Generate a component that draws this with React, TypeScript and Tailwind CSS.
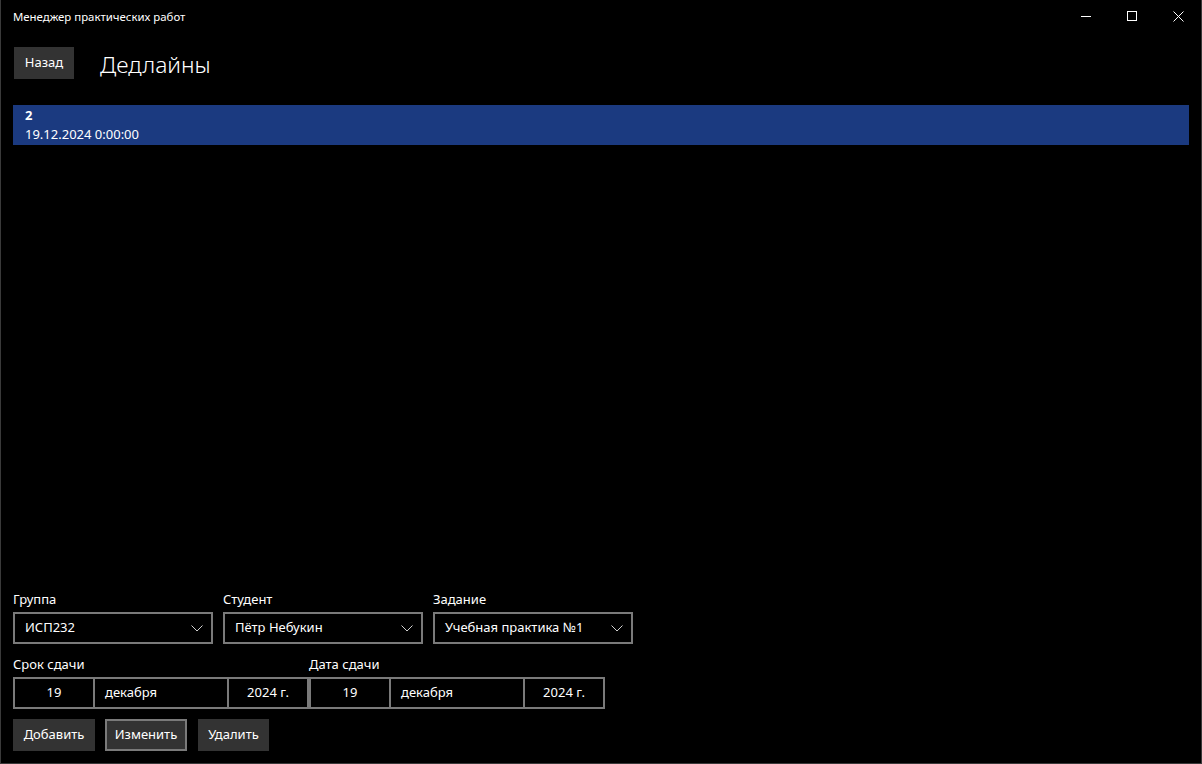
import React from 'react';

const font = { fontFamily: '"Noto Sans", "Open Sans", sans-serif' };

const ChevronDown: React.FC = () => (
  <svg width="12" height="7" viewBox="0 0 12 7" className="shrink-0">
    <path d="M0.5 0.5 L6 6 L11.5 0.5" fill="none" stroke="#d0d0d0" strokeWidth="1" />
  </svg>
);

const ComboBox: React.FC<{ label: string; value: string }> = ({ label, value }) => (
  <div className="flex flex-col w-[200px]">
    <div className="h-[19px] leading-[19px] text-[13px] mb-[3px]">{label}</div>
    <div className="h-[32px] border-2 border-[#7a7a7a] flex items-center justify-between pl-[10px] pr-[8px]">
      <span className="text-[13px]">{value}</span>
      <ChevronDown />
    </div>
  </div>
);

const DatePicker: React.FC<{ label: string; day: string; month: string; year: string }> = ({ label, day, month, year }) => (
  <div className="flex flex-col w-[296px]">
    <div className="h-[19px] leading-[19px] text-[13px] mb-[3px]">{label}</div>
    <div className="h-[32px] border-2 border-[#7a7a7a] flex text-[13px]">
      <div className="w-[80px] flex items-center justify-center border-r-2 border-[#7a7a7a]">{day}</div>
      <div className="w-[134px] flex items-center pl-[10px] border-r-2 border-[#7a7a7a]">{month}</div>
      <div className="flex-1 flex items-center justify-center">{year}</div>
    </div>
  </div>
);

const WindowControls: React.FC = () => (
  <div className="flex h-[32px]">
    <div className="w-[46px] flex items-center justify-center">
      <svg width="10" height="10" viewBox="0 0 10 10">
        <path d="M0 5.5 H10" stroke="#ffffff" strokeWidth="1" />
      </svg>
    </div>
    <div className="w-[46px] flex items-center justify-center">
      <svg width="10" height="10" viewBox="0 0 10 10">
        <rect x="0.5" y="0.5" width="9" height="9" fill="none" stroke="#ffffff" strokeWidth="1" />
      </svg>
    </div>
    <div className="w-[46px] flex items-center justify-center">
      <svg width="11" height="11" viewBox="0 0 11 11">
        <path d="M0.5 0.5 L10.5 10.5 M10.5 0.5 L0.5 10.5" stroke="#ffffff" strokeWidth="1" />
      </svg>
    </div>
  </div>
);

const App: React.FC = () => {
  return (
    <div
      className="w-[1202px] h-[764px] bg-black text-white flex flex-col border-x border-b border-[#3a3a3a] overflow-hidden"
      style={font}
    >
      <div className="h-[32px] flex items-center justify-between shrink-0">
        <span className="pl-[12px] pt-[2px] text-[11.4px]">Менеджер практических работ</span>
        <WindowControls />
      </div>

      <div className="flex-1 flex flex-col px-[12px] pb-[12px]">
        <div className="flex items-center mt-[15px] pl-[1px]">
          <button className="w-[60px] h-[32px] bg-[#333333] text-[13px] text-white">Назад</button>
          <h1 className="ml-[26px] mt-[4px] text-[22.8px] font-light leading-none">Дедлайны</h1>
        </div>

        <div className="mt-[26px] h-[40px] bg-[#1b3a80] pl-[12px] pt-[1px] flex flex-col text-[13px] leading-[19px]">
          <span className="font-bold">2</span>
          <span>19.12.2024 0:00:00</span>
        </div>

        <div className="flex-1" />

        <div className="flex gap-[10px]">
          <ComboBox label="Группа" value="ИСП232" />
          <ComboBox label="Студент" value="Пётр Небукин" />
          <ComboBox label="Задание" value="Учебная практика №1" />
        </div>

        <div className="flex mt-[11px]">
          <DatePicker label="Срок сдачи" day="19" month="декабря" year="2024 г." />
          <DatePicker label="Дата сдачи" day="19" month="декабря" year="2024 г." />
        </div>

        <div className="flex mt-[10px] text-[13px]">
          <button className="w-[82px] h-[32px] bg-[#333333] text-white">Добавить</button>
          <button className="ml-[10px] w-[82px] h-[32px] bg-[#333333] border-2 border-[#7a7a7a] text-white">Изменить</button>
          <button className="ml-[11px] w-[71px] h-[32px] bg-[#333333] text-white">Удалить</button>
        </div>
      </div>
    </div>
  );
};

export default App;
